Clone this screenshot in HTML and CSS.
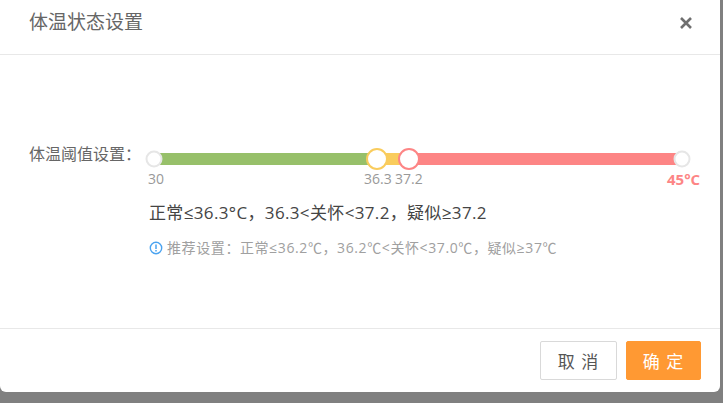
FILE: index.html
```html
<!DOCTYPE html>
<html lang="zh-CN">
<head>
    <meta charset="UTF-8">
    <meta name="viewport" content="width=device-width, initial-scale=1.0">
    <title>体温状态设置</title>
    <link rel="stylesheet" href="styles.css">
</head>
<body>
    <div class="modal">
        <div class="modal-header">
            <span class="modal-title">体温状态设置</span>
            <svg class="close-icon" width="14" height="14" viewBox="0 0 14 14">
                <path d="M2 2L12 12M12 2L2 12" stroke="#6f6f6f" stroke-width="2.6" fill="none"/>
            </svg>
        </div>
        <div class="modal-body">
            <div class="form-row">
                <div class="form-label">体温阈值设置：</div>
                <div class="form-content">
                    <div class="slider">
                        <div class="track">
                            <div class="seg seg-green"></div>
                            <div class="seg seg-yellow"></div>
                            <div class="seg seg-red"></div>
                        </div>
                        <span class="handle handle-min"></span>
                        <span class="handle handle-low"></span>
                        <span class="handle handle-high"></span>
                        <span class="handle handle-max"></span>
                    </div>
                    <div class="marks">
                        <span class="mark mark-min">30</span>
                        <span class="mark mark-low">36.3</span>
                        <span class="mark mark-high">37.2</span>
                        <span class="mark mark-max">45°C</span>
                    </div>
                    <div class="summary">正常≤36.3°C，36.3&lt;关怀&lt;37.2，疑似≥37.2</div>
                    <div class="hint">
                        <svg class="hint-icon" width="14" height="14" viewBox="0 0 14 14">
                            <circle cx="7" cy="7" r="5.7" fill="none" stroke="#4aa3f0" stroke-width="1.4"/>
                            <path d="M7 3.6V8" stroke="#4aa3f0" stroke-width="1.5"/>
                            <path d="M7 9.1V10.6" stroke="#4aa3f0" stroke-width="1.5"/>
                        </svg>
                        <span>推荐设置：正常≤36.2℃，36.2℃&lt;关怀&lt;37.0℃，疑似≥37℃</span>
                    </div>
                </div>
            </div>
        </div>
        <div class="modal-footer">
            <button class="btn btn-cancel">取 消</button>
            <button class="btn btn-ok">确 定</button>
        </div>
    </div>
</body>
</html>
```

FILE: styles.css
```css
html, body {
    height: 100%;
}
body {
    margin: 0;
    background: #808080;
    font-family: "Open Sans", "Noto Sans CJK SC", sans-serif;
    overflow: hidden;
}
.modal {
    width: 720px;
    height: 392px;
    background: #fff;
    border-radius: 0 0 6px 6px;
    display: flex;
    flex-direction: column;
}
.modal-header {
    height: 54px;
    border-bottom: 1px solid #e8e8e8;
    padding: 0 30px 0 29px;
    display: flex;
    justify-content: space-between;
    align-items: center;
    box-sizing: content-box;
}
.modal-title {
    font-size: 19px;
    line-height: 26px;
    color: #666;
    margin-top: -11px;
}
.close-icon {
    margin-top: -9px;
    margin-right: -3px;
}
.modal-body {
    flex: 1;
    padding: 87px 0 0 29px;
}
.form-row {
    display: flex;
}
.form-label {
    width: 120px;
    font-size: 16px;
    line-height: 24px;
    color: #666;
}
.form-content {
    width: 552px;
}
.slider {
    position: relative;
    margin: 11px 0 0 5px;
    width: 528px;
}
.track {
    display: flex;
    height: 12px;
}
.seg-green {
    width: 218px;
    background: #97c06a;
}
.seg-yellow {
    width: 36px;
    background: #f9cc5d;
}
.seg-red {
    flex: 1;
    background: #fd8585;
}
.handle {
    position: absolute;
    top: 50%;
    transform: translate(-50%, -50%);
    background: #fff;
    border-radius: 50%;
    box-sizing: border-box;
}
.handle-min, .handle-max {
    width: 17px;
    height: 17px;
    border: 2px solid #e6e6e6;
}
.handle-min {
    left: 0;
}
.handle-max {
    left: 100%;
}
.handle-low, .handle-high {
    width: 22px;
    height: 22px;
}
.handle-low {
    left: 223px;
    border: 2px solid #f9cc5d;
}
.handle-high {
    left: 255px;
    border: 2px solid #fd8585;
}
.marks {
    position: relative;
    height: 20px;
    margin-top: 4px;
    font-size: 14px;
    line-height: 20px;
    color: #999;
}
.mark {
    position: absolute;
    top: 0;
}
.mark-min {
    left: -1px;
}
.mark-low {
    left: 215px;
}
.mark-high {
    left: 246px;
}
.mark-max {
    left: 518px;
    font-size: 15px;
    color: #fd8585;
    font-weight: bold;
}
.summary {
    margin-top: 12px;
    font-size: 17px;
    letter-spacing: 0.35px;
    line-height: 24px;
    color: #444;
}
.hint {
    margin-top: 13px;
    display: flex;
    align-items: center;
    gap: 4px;
    font-size: 14px;
    letter-spacing: 0.6px;
    line-height: 20px;
    color: #a0a0a0;
}
.modal-footer {
    height: 64px;
    border-top: 1px solid #e8e8e8;
    display: flex;
    justify-content: flex-end;
    align-items: flex-start;
    gap: 9px;
    padding: 12px 19px 0 0;
    box-sizing: border-box;
}
.btn {
    height: 39px;
    border-radius: 2px;
    font-family: inherit;
    font-size: 17px;
    letter-spacing: 1px;
    padding: 0;
    cursor: pointer;
}
.btn-cancel {
    width: 77px;
    background: #fff;
    border: 1px solid #d9d9d9;
    color: #555;
}
.btn-ok {
    width: 75px;
    background: #ff9933;
    border: 1px solid #ff9933;
    color: #fff;
}
```
